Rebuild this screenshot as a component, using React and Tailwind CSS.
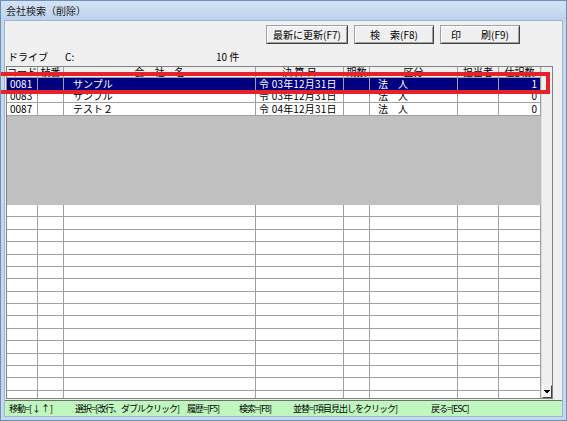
import React from "react";

const COLS = [
  { w: 31, label: "コード" },
  { w: 26, label: "枝番" },
  { w: 192, label: "会　社　名" },
  { w: 88, label: "決 算 日" },
  { w: 26, label: "期数" },
  { w: 88, label: "区分" },
  { w: 41, label: "担当者" },
  { w: 42, label: "仕訳数" },
];

const ROWS = [
  { code: "0081", name: "サンプル", date: "令 03年12月31日", kind: "法　人", n: "1", sel: true },
  { code: "0083", name: "サンプル", date: "令 03年12月31日", kind: "法　人", n: "0" },
  { code: "0087", name: "テスト２", date: "令 04年12月31日", kind: "法　人", n: "0" },
];

// status bar items: [text, width up to next item]
const HINTS = [
  ["移動=[ ↓ ↑ ]", 66],
  ["選択=[改行、ダブルクリック]", 112],
  ["履歴=[F5]", 52],
  ["検索=[F8]", 54],
  ["並替=[項目見出しをクリック]", 138],
  ["戻る=[ESC]", 80],
];

function Btn({ children, w }) {
  return (
    <button
      className="h-[19px] border border-t-[#a0a0a0] border-l-[#a0a0a0] border-r-[#404040] border-b-[#404040] bg-[#f0f0f0] shadow-[inset_1px_1px_0_#ffffff,inset_-1px_-1px_0_#a0a0a0] text-[10px] leading-none text-black"
      style={{ width: w }}
    >
      {children}
    </button>
  );
}

function DataRow({ r }) {
  const cell = "h-full border-r border-[#a0a0a0] flex items-center overflow-hidden whitespace-nowrap";
  return (
    <div className={`flex h-[12.67px] shrink-0 border-b border-[#a0a0a0] text-[10px] leading-none ${r.sel ? "bg-[#000080] text-white" : "bg-white text-black"}`}>
      <div className={`${cell} w-[31px] pl-[3px]`}>{r.code}</div>
      <div className={`${cell} w-[26px]`}></div>
      <div className={`${cell} w-[192px] pl-[9px]`}>{r.name}</div>
      <div className={`${cell} w-[88px] pl-[3px] tracking-[0.2px]`}>{r.date}</div>
      <div className={`${cell} w-[26px]`}></div>
      <div className={`${cell} w-[88px] pl-[8px]`}>{r.kind}</div>
      <div className={`${cell} w-[41px]`}></div>
      <div className={`${cell} w-[42px] justify-end pr-[3px]`}>{r.n}</div>
    </div>
  );
}

function EmptyRow() {
  return (
    <div className="flex h-[12.4px] shrink-0 border-b border-[#a0a0a0] bg-white">
      {COLS.map((c, i) => (
        <div key={i} className="h-full border-r border-[#a0a0a0]" style={{ width: c.w }} />
      ))}
    </div>
  );
}

export default function App() {
  return (
    <div className="w-[567px] h-[421px] relative flex flex-col bg-[#c4d8ee] border border-[#6f8fb5] font-['MS_UI_Gothic','Noto_Sans_CJK_JP',sans-serif] text-black overflow-hidden">
      {/* title bar */}
      <div className="h-[19px] shrink-0 flex items-center pl-[5px] bg-gradient-to-b from-[#d3e3f4] to-[#bcd3ec] text-[10px] text-[#1e1e1e]">
        会社検索（削除）
      </div>

      {/* client */}
      <div className="flex-1 mx-[3px] bg-[#f0f0f0] border border-[#9fb5cf] flex flex-col min-h-0">
        <div className="flex justify-end gap-[6px] pr-[42px] pt-[4px]">
          <Btn w={82}>最新に更新(F7)</Btn>
          <Btn w={80}>検　索(F8)</Btn>
          <Btn w={80}>印　　刷(F9)</Btn>
        </div>

        <div className="flex items-center h-[17px] mt-[4px] text-[10px] pl-[3px]">
          <span className="w-[57px]">ドライブ</span>
          <span className="w-[151px]">C:</span>
          <span>10 件</span>
        </div>

        {/* grid */}
        <div className="ml-[1px] mt-[1px] w-[547px] h-[333px] border border-[#828282] flex bg-white overflow-hidden">
          <div className="w-[534px] flex flex-col overflow-hidden">
            <div className="flex h-[11px] shrink-0 border-b border-[#a0a0a0] bg-[#f0f0f0] text-[10px] leading-none">
              {COLS.map((c, i) => (
                <div
                  key={i}
                  className="h-full border-r border-[#a0a0a0] flex items-center justify-center whitespace-nowrap overflow-hidden"
                  style={{ width: c.w }}
                >
                  {c.label}
                </div>
              ))}
            </div>
            {ROWS.map((r) => (
              <DataRow key={r.code} r={r} />
            ))}
            <div className="h-[89px] shrink-0 bg-[#c0c0c0]" />
            {Array.from({ length: 18 }).map((_, i) => (
              <EmptyRow key={i} />
            ))}
          </div>
          {/* scrollbar */}
          <div className="flex-1 flex flex-col bg-[#f0f0f0] border-l border-[#dcdcdc]">
            <div className="h-[11px] flex items-center justify-center text-[8px] leading-none">-</div>
            <div className="flex-1" />
            <div className="h-[13px] flex items-center justify-center border border-t-white border-l-white border-r-[#404040] border-b-[#404040] bg-[#f0f0f0]">
              <svg width="6" height="4" viewBox="0 0 6 4">
                <path d="M0 0h6v1H0zM1 1h4v1H1zM2 2h2v1H2z" fill="#000" />
              </svg>
            </div>
          </div>
        </div>

        {/* status bar */}
        <div className="mt-[1px] flex-1 bg-[#bff7bf] border-t border-[#707070] flex items-center pl-[4px] text-[9px] tracking-[-1px] whitespace-nowrap">
          {HINTS.map(([t, w]) => (
            <span key={t} className="shrink-0" style={{ width: w }}>
              {t}
            </span>
          ))}
        </div>
      </div>
      <div className="h-[3px] shrink-0" />

      {/* red highlight overlay */}
      <div className="absolute left-[-4px] top-[71px] w-[553px] h-[22px] border-[4px] border-[#e8202a] pointer-events-none" />
    </div>
  );
}
